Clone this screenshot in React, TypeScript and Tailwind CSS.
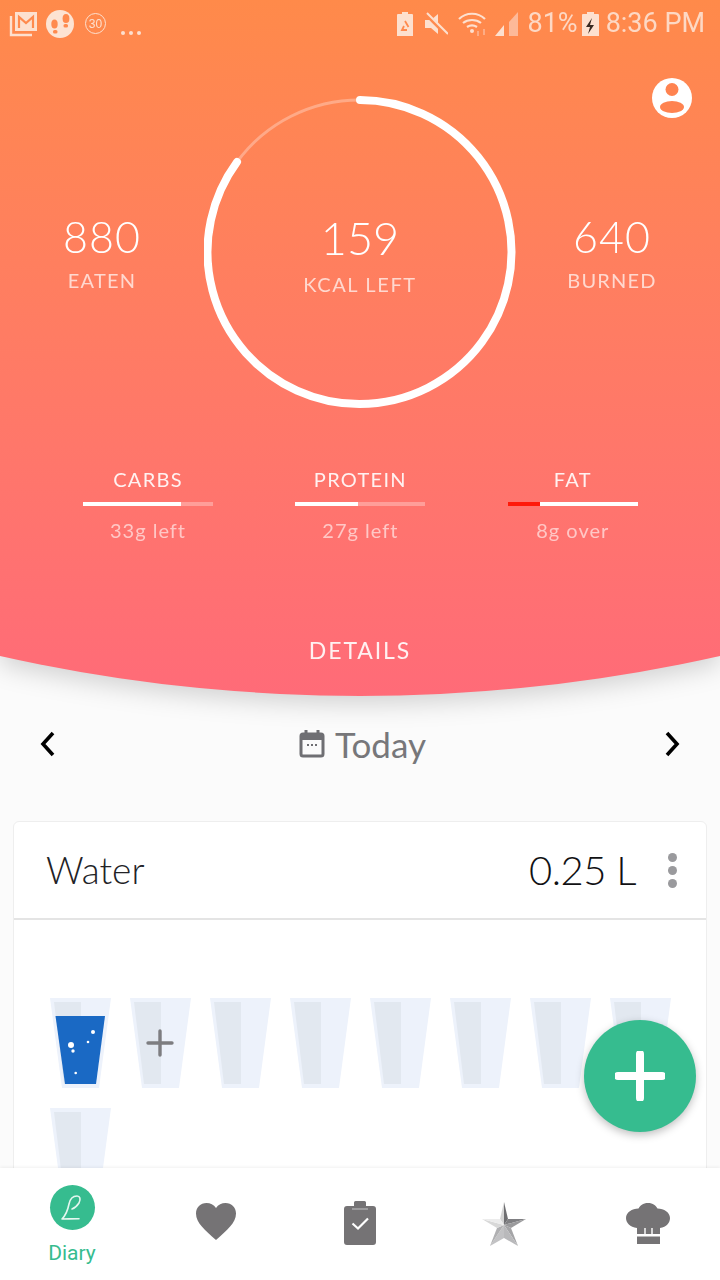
const CUPS = [0, 1, 2, 3, 4, 5, 6, 7, 8];

function LeftStatusIcons() {
  return (
    <div className="flex items-center">
      <svg width="30" height="26" viewBox="0 0 30 26" fill="none" className="ml-[9px]">
        <path d="M2 5v19h21" stroke="#fde0cf" strokeWidth="2.4" />
        <rect x="6" y="1" width="22" height="19" fill="#fde0cf" />
        <path d="M10 17V6l7 6 7-6v11" stroke="#ff8a4e" strokeWidth="2.2" />
      </svg>
      <svg width="30" height="30" viewBox="0 0 30 30" className="ml-[6px]">
        <circle cx="15" cy="15" r="14" fill="#fde3d3" />
        <ellipse cx="21" cy="9.5" rx="3.4" ry="4.6" fill="#ff8a4e" />
        <rect x="18.5" y="15" width="4.5" height="3.6" rx="1.6" fill="#ff8a4e" />
        <ellipse cx="9.5" cy="15" rx="3.2" ry="4.6" fill="#ff8a4e" />
        <rect x="8" y="21" width="4.5" height="3.6" rx="1.6" fill="#ff8a4e" />
      </svg>
      <div className="ml-[10px] flex h-[21px] w-[21px] items-center justify-center rounded-full border border-[#fde0cf] font-['Liberation_Sans',sans-serif] text-[12px] text-[#fde0cf]">
        30
      </div>
      <div className="ml-[15px] mt-[18px] flex gap-[4px]">
        <span className="h-[4px] w-[4px] rounded-full bg-[#fde0cf]" />
        <span className="h-[4px] w-[4px] rounded-full bg-[#fde0cf]" />
        <span className="h-[4px] w-[4px] rounded-full bg-[#fde0cf]" />
      </div>
    </div>
  );
}

function RightStatusIcons() {
  return (
    <div className="flex items-center pr-[15px] font-['Roboto',sans-serif] text-[27px] leading-none text-[#fdd8c4]">
      <svg width="16" height="24" viewBox="0 0 16 24" fill="none">
        <path d="M5 0h6v2h4a1 1 0 0 1 1 1v21H0V3a1 1 0 0 1 1-1h4z" fill="#fde0cf" />
        <path d="M8 9l3.500 6M10 18H5l2-4" stroke="#ff8a4e" strokeWidth="1.8" />
      </svg>
      <svg width="24" height="24" viewBox="0 0 24 24" className="ml-[11px]">
        <path d="M1 8h6l7-6v20l-7-6H1z" fill="#fde0cf" />
        <path d="M1 1l22 22" stroke="#ff8a4e" strokeWidth="4" />
        <path d="M3 1l21 21" stroke="#fde0cf" strokeWidth="2" />
      </svg>
      <svg width="30" height="24" viewBox="0 0 30 24" fill="none" className="ml-[10px]">
        <path d="M1 7c7-7 19-7 26 0M5 11c5-4 13-4 18 0M9 15c3-2 7-2 10 0" stroke="#fde0cf" strokeWidth="2.2" />
        <circle cx="14" cy="19" r="2" fill="#fde0cf" />
        <path d="M20 19v5M26 17v6" stroke="#fdb999" strokeWidth="1.5" />
      </svg>
      <svg width="23" height="24" viewBox="0 0 23 24" className="ml-[7px]">
        <path d="M0 24l9-11v11z" fill="#fde0cf" />
        <path d="M14 24V10l9-10v24z" fill="#fdb999" />
      </svg>
      <span className="ml-[10px]">81%</span>
      <svg width="17" height="24" viewBox="0 0 17 24" className="ml-[4px]">
        <path d="M5 0h7v2h4a1 1 0 0 1 1 1v21H0V3a1 1 0 0 1 1-1h4z" fill="#fde0cf" />
        <path d="M10 6l-6 9h4l-2 7 6-9H8z" fill="#3a2a22" />
      </svg>
      <span className="ml-[7px]">8:36 PM</span>
    </div>
  );
}

function CalorieRing() {
  return (
    <div className="relative flex h-[312px] w-[312px] flex-col items-center justify-center pt-[3px]">
      <svg width="312" height="312" viewBox="0 0 312 312" fill="none" className="absolute inset-0">
        <path d="M33 66A152 152 0 0 1 156 4" stroke="#ffffff" strokeOpacity="0.3" strokeWidth="3" />
        <path d="M156 4A152 152 0 1 1 33 66" stroke="#ffffff" strokeWidth="8" strokeLinecap="round" />
      </svg>
      <div className="text-[45px] font-light leading-[54px] text-white">159</div>
      <div className="mt-[6px] text-[20px] leading-[26px] tracking-[1.6px] text-white/70">KCAL LEFT</div>
    </div>
  );
}

function Macro({ name, note, fill, over }: { name: string; note: string; fill: string; over?: boolean }) {
  return (
    <div className="flex w-[130px] flex-col items-center">
      <div className="text-[20px] leading-[26px] tracking-[1.3px] text-white/90">{name}</div>
      <div className={`mt-[10px] flex h-[4px] w-full ${over ? "bg-white" : "bg-white/30"}`}>
        <div className={`h-full ${fill} ${over ? "bg-[#ff1a0a]" : "bg-white"}`} />
      </div>
      <div className="mt-[11px] text-[20px] leading-[26px] tracking-[1px] text-white/60">{note}</div>
    </div>
  );
}

function Header() {
  return (
    <div className="drop-shadow-[0_8px_12px_rgba(0,0,0,0.16)]">
      <div className="relative h-[696px] bg-gradient-to-b from-[#ff8a4a] to-[#ff6b78] [clip-path:circle(1640px_at_360px_-944px)]">
        <div className="flex h-[44px] items-center justify-between pt-[3px]">
          <LeftStatusIcons />
          <RightStatusIcons />
        </div>
        <svg width="40" height="40" viewBox="0 0 40 40" className="absolute left-[652px] top-[78px]">
          <circle cx="20" cy="20" r="20" fill="#ffffff" />
          <circle cx="20" cy="11.5" r="6.5" fill="#ff8350" />
          <ellipse cx="20" cy="29" rx="12" ry="6" fill="#ff8350" />
        </svg>
        <div className="mt-[52px] flex items-center">
          <div className="flex w-[204px] flex-col items-center">
            <div className="text-[43px] font-light leading-[50px] tracking-[1px] text-white">880</div>
            <div className="mt-[5px] text-[20px] leading-[26px] tracking-[1.2px] text-white/70">EATEN</div>
          </div>
          <CalorieRing />
          <div className="flex w-[192px] flex-col items-center">
            <div className="text-[43px] font-light leading-[50px] tracking-[1px] text-white">640</div>
            <div className="mt-[5px] text-[20px] leading-[26px] tracking-[1.2px] text-white/70">BURNED</div>
          </div>
        </div>
        <div className="mt-[58px] flex gap-[82.4px] pl-[83px]">
          <Macro name="CARBS" note="33g left" fill="w-[98px]" />
          <Macro name="PROTEIN" note="27g left" fill="w-[63px]" />
          <Macro name="FAT" note="8g over" fill="w-[32px]" over />
        </div>
        <div className="mt-[93px] text-center text-[23px] leading-[28px] tracking-[1.9px] text-white/90">DETAILS</div>
      </div>
    </div>
  );
}

function DateRow() {
  return (
    <div className="flex items-center justify-between px-[40px] pt-[28px]">
      <svg width="15" height="26" viewBox="0 0 15 26" fill="none">
        <path d="M13 2L3 13l10 11" stroke="#000000" strokeWidth="3.6" />
      </svg>
      <div className="ml-[5px] flex items-center gap-[10px]">
        <svg width="26" height="28" viewBox="0 0 26 28" fill="none">
          <path d="M7 0v4M19 0v4" stroke="#6f6f73" strokeWidth="3" />
          <rect x="2" y="4" width="22" height="22" rx="2" stroke="#6f6f73" strokeWidth="3" />
          <rect x="2" y="4" width="22" height="6" fill="#6f6f73" />
          <path d="M8 15h2M12 15h2M16 15h2" stroke="#6f6f73" strokeWidth="2" />
        </svg>
        <span className="text-[35px] leading-[40px] text-[#77777a]">Today</span>
      </div>
      <svg width="15" height="26" viewBox="0 0 15 26" fill="none">
        <path d="M2 2l10 11L2 24" stroke="#000000" strokeWidth="3.6" />
      </svg>
    </div>
  );
}

function Cup({ filled, plus }: { filled?: boolean; plus?: boolean }) {
  return (
    <svg width="61" height="90" viewBox="0 0 61 90">
      <path d="M0 0h61L49 90H12z" fill="#edf2fb" />
      <path d="M4 4h27v82H14z" fill="#e2e8f0" />
      {filled && (
        <>
          <path d="M5.500 18H55l-9 68H15z" fill="#1a69c4" />
          <circle cx="43" cy="34" r="2" fill="#ffffff" />
          <circle cx="21" cy="47" r="3" fill="#ffffff" />
          <circle cx="23" cy="53" r="1.7" fill="#ffffff" />
          <circle cx="38" cy="44" r="1.3" fill="#ffffff" />
          <circle cx="25.7" cy="75" r="1.3" fill="#ffffff" />
        </>
      )}
      {plus && <path d="M18 45h24M30 33v24" stroke="#7d7d80" strokeWidth="3.4" strokeLinecap="round" />}
    </svg>
  );
}

function WaterCard() {
  return (
    <div className="mx-[13px] mt-[57px] rounded-t-[6px] border border-[#eeeeee] bg-white">
      <div className="flex h-[98px] items-center border-b-2 border-[#e4e4e4] pl-[32px] pr-[29px]">
        <span className="text-[37px] font-light leading-[44px] text-[#222226]">Water</span>
        <span className="ml-auto text-[40px] font-light leading-[44px] tracking-[-0.5px] text-[#111114]">0.25 L</span>
        <div className="ml-[32px] flex flex-col gap-[4px]">
          <span className="h-[9px] w-[9px] rounded-full bg-[#9a9a9d]" />
          <span className="h-[9px] w-[9px] rounded-full bg-[#9a9a9d]" />
          <span className="h-[9px] w-[9px] rounded-full bg-[#9a9a9d]" />
        </div>
      </div>
      <div className="flex flex-wrap gap-x-[19px] gap-y-[20px] pl-[36px] pt-[78px]">
        {CUPS.map((i) => (
          <Cup key={i} filled={i === 0} plus={i === 1} />
        ))}
      </div>
    </div>
  );
}

function BottomNav() {
  return (
    <div className="z-10 grid h-[112px] shrink-0 grid-cols-5 bg-white shadow-[0_-1px_3px_rgba(0,0,0,0.06)]">
      <div className="flex flex-col items-center pt-[17px]">
        <div className="flex h-[45px] w-[45px] items-center justify-center rounded-full bg-[#36bc8f]">
          <svg width="24" height="28" viewBox="0 0 24 28" fill="none">
            <path
              d="M2 25c5 0 10-.3 17-.3M2 25c4-4 6-10 7-15 1-5 4-8 8-8 3 0 4 3 2 7-2 3-4 5-7 6"
              stroke="#e4f7f0"
              strokeWidth="1.6"
              strokeLinecap="round"
            />
          </svg>
        </div>
        <span className="mt-[10px] font-['Roboto',sans-serif] text-[21px] leading-[26px] text-[#36bc8f]">Diary</span>
      </div>
      <div className="flex items-start justify-center pt-[35px]">
        <svg width="40" height="37" viewBox="0 0 40 37">
          <path d="M20 37C9 27 0 20 0 10.500 0 4.500 4.500 0 10.500 0c3.800 0 7.300 1.800 9.500 5 2.200-3.200 5.700-5 9.500-5C35.500 0 40 4.500 40 10.500 40 20 31 27 20 37z" fill="#757375" />
        </svg>
      </div>
      <div className="flex items-start justify-center pt-[33px]">
        <svg width="32" height="44" viewBox="0 0 32 44" fill="none">
          <path d="M10 5V1.500A1.500 1.500 0 0 1 11.500 0h9A1.500 1.500 0 0 1 22 1.500V5h7a3 3 0 0 1 3 3v33a3 3 0 0 1-3 3H3a3 3 0 0 1-3-3V8a3 3 0 0 1 3-3z" fill="#757375" />
          <path d="M8 8h16" stroke="#b8b8b9" strokeWidth="1.2" />
          <path d="M8.500 22.500l5.500 5 10-10" stroke="#ffffff" strokeWidth="2.2" />
        </svg>
      </div>
      <div className="flex items-start justify-center pt-[34px]">
        <svg width="44" height="44" viewBox="0 0 44 44">
          <path d="M22 0l-4 17 4 6z" fill="#d4d4d4" />
          <path d="M22 0l4 17-4 6z" fill="#6f6f72" />
          <path d="M26 17h18l-22 6z" fill="#7f7f82" />
          <path d="M44 17L29 26l-7-3z" fill="#9a9a9c" />
          <path d="M29 26l7 18-14-21z" fill="#a5a5a7" />
          <path d="M36 44l-14-8v-13z" fill="#b9b9bb" />
          <path d="M8 44l14-8v-13z" fill="#c2c2c4" />
          <path d="M15 26L8 44l14-21z" fill="#b0b0b2" />
          <path d="M0 17l15 9 7-3z" fill="#d8d8d8" />
          <path d="M0 17h18l4 6z" fill="#ececec" />
        </svg>
      </div>
      <div className="flex items-start justify-center pt-[35px]">
        <svg width="44" height="41" viewBox="0 0 44 41">
          <path d="M22 0c5 0 8 2.500 9.500 5.500C38 5.500 44 9.500 44 15c0 5-3.500 9-10 10v6H11v-6C4 24 0 20 0 15 0 9.500 6 5.500 12.500 5.500 14 2.500 17 0 22 0z" fill="#757375" />
          <path d="M19 25v6M26 25v6" stroke="#ffffff" strokeWidth="1.4" />
          <path d="M11 33.500h23V41H11z" fill="#757375" />
        </svg>
      </div>
    </div>
  );
}

export default function App() {
  return (
    <div className="relative flex h-[1280px] w-[720px] flex-col overflow-hidden bg-[#fbfbfb] font-['Lato',sans-serif]">
      <div className="min-h-0 flex-1 overflow-hidden">
        <Header />
        <DateRow />
        <WaterCard />
      </div>
      <BottomNav />
      <button className="absolute left-[584px] top-[1020px] z-20 flex h-[112px] w-[112px] items-center justify-center rounded-full bg-[#36bc8f] shadow-[0_3px_8px_rgba(0,0,0,0.25)]">
        <svg width="50" height="50" viewBox="0 0 50 50">
          <path d="M25 3v44M3 25h44" stroke="#ffffff" strokeWidth="8" strokeLinecap="round" />
        </svg>
      </button>
    </div>
  );
}
